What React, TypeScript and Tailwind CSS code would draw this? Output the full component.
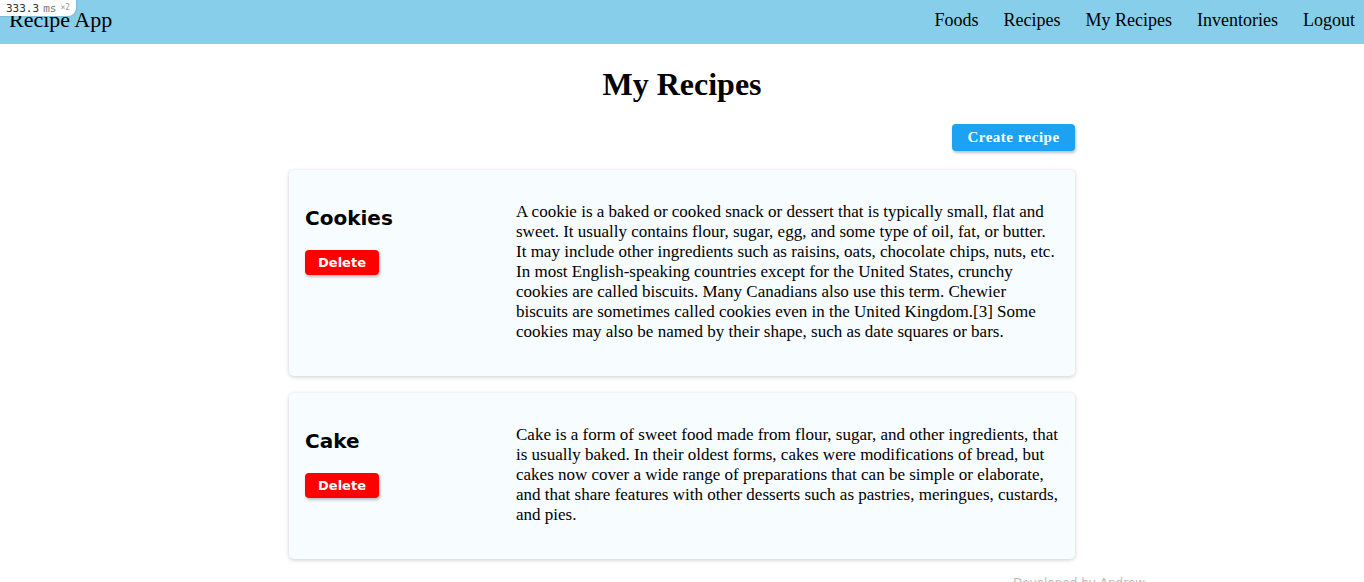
import React from 'react';

const recipes = [
  {
    name: 'Cookies',
    description:
      'A cookie is a baked or cooked snack or dessert that is typically small, flat and sweet. It usually contains flour, sugar, egg, and some type of oil, fat, or butter. It may include other ingredients such as raisins, oats, chocolate chips, nuts, etc. In most English-speaking countries except for the United States, crunchy cookies are called biscuits. Many Canadians also use this term. Chewier biscuits are sometimes called cookies even in the United Kingdom.[3] Some cookies may also be named by their shape, such as date squares or bars.',
  },
  {
    name: 'Cake',
    description:
      'Cake is a form of sweet food made from flour, sugar, and other ingredients, that is usually baked. In their oldest forms, cakes were modifications of bread, but cakes now cover a wide range of preparations that can be simple or elaborate, and that share features with other desserts such as pastries, meringues, custards, and pies.',
  },
];

const links = ['Foods', 'Recipes', 'My Recipes', 'Inventories', 'Logout'];

export default function App() {
  return (
    <div className="relative min-h-screen bg-white text-black font-['Liberation_Serif',serif]">
      {/* dev timing badge */}
      <div className="absolute left-0 top-0 z-10 flex h-[16px] items-center gap-1 rounded-br-lg bg-white pl-[6px] pr-[6px] font-['DejaVu_Sans_Mono',monospace] text-[11px] leading-none text-[#333] shadow-[0_0_2px_rgba(0,0,0,0.3)]">
        <span>333.3</span>
        <span className="text-[#777]">ms</span>
        <span className="text-[8px] text-[#999]">×2</span>
      </div>

      <nav className="flex h-[44px] items-start justify-between bg-[#87ceeb] px-[9px] pt-[7px]">
        <span className="text-[22px] leading-[26px]">Recipe App</span>
        <ul className="flex gap-[25px] pt-[2px] text-[18px] leading-[22px]">
          {links.map((l) => (
            <li key={l}>{l}</li>
          ))}
        </ul>
      </nav>

      <h1 className="mt-[22px] text-center text-[32px] font-bold leading-[37px]">My Recipes</h1>

      <div className="mx-auto mt-[21px] w-[786px]">
        <div className="flex justify-end">
          <button className="h-[27px] w-[123px] rounded-[4px] bg-[#1da1f2] text-[15px] font-bold tracking-[0.5px] text-white shadow-[1px_2px_3px_rgba(0,0,0,0.25)]">
            Create recipe
          </button>
        </div>

        <div className="mt-[19px] flex flex-col gap-[17px]">
          {recipes.map((r) => (
            <div
              key={r.name}
              className="flex rounded-[5px] bg-[#f7fcff] px-[16px] pt-[32px] pb-[34px] shadow-[0_1px_4px_rgba(0,0,0,0.2)]"
            >
              <div className="w-[211px] shrink-0 pt-[4px]">
                <h2 className="font-['DejaVu_Sans',sans-serif] text-[20px] font-bold leading-[24px]">{r.name}</h2>
                <button className="mt-[20px] h-[25px] w-[74px] rounded-[4px] bg-[#ff0000] font-['DejaVu_Sans',sans-serif] text-[13px] font-bold text-white shadow-[1px_2px_3px_rgba(0,0,0,0.25)]">
                  Delete
                </button>
              </div>
              <p className="flex-1 text-[17px] leading-[20px]">{r.description}</p>
            </div>
          ))}
        </div>

        <div className="mt-[15px] flex justify-end font-['DejaVu_Sans',sans-serif] text-[12px] text-[#bbb]">
          <span className="mr-[-70px]">Developed by Andrew</span>
        </div>
      </div>
    </div>
  );
}
